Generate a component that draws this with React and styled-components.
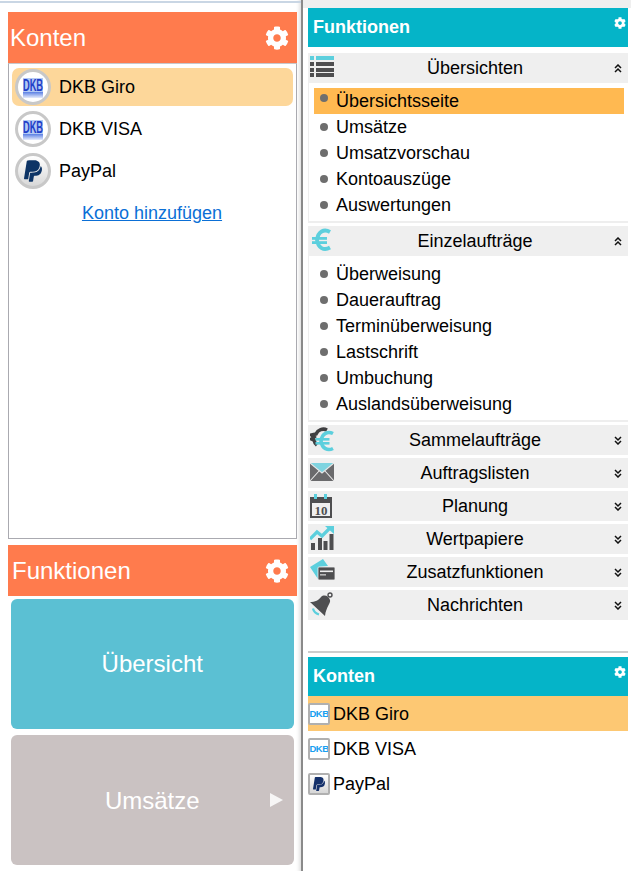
import React from "react";
import styled, { createGlobalStyle } from "styled-components";
import { FaCog, FaPaypal } from "react-icons/fa";

const Global = createGlobalStyle`
  html, body { margin: 0; padding: 0; background: #fff; }
  body { font-family: "Liberation Sans", Arial, sans-serif; color: #000; overflow: hidden; }
  * { box-sizing: border-box; }
`;

const Page = styled.div`
  display: flex;
  width: 631px;
  height: 871px;
  overflow: hidden;
`;

const LeftPane = styled.div`
  width: 303px;
  height: 871px;
  flex: none;
  display: flex;
  flex-direction: column;
  padding: 12px 4px 0 8px;
  border-right: 2px solid #8a8a8a;
  box-shadow: inset -5px 0 4px -4px #d4d4d4;
  position: relative;
  &::before {
    content: "";
    position: absolute;
    left: 0; right: 0; top: 1px;
    height: 2px;
    background: #c9d6e4;
  }
`;

const OrangeHeader = styled.div`
  height: 51px;
  flex: none;
  background: #ff7b4d;
  color: #fff;
  font-size: 24px;
  display: flex;
  align-items: center;
  justify-content: space-between;
  padding: ${(p) => (p.$tight ? "0 8px 0 4px" : "0 8px 0 2px")};
  svg { width: 24px; height: 24px; }
`;

const AccountBox = styled.div`
  height: 476px;
  flex: none;
  border: 1px solid #aaaab0;
  border-top-color: #c8c8cc;
  padding: 4px 3px 3px;
  display: flex;
  flex-direction: column;
  margin-bottom: 6px;
`;

const BigAccount = styled.div`
  height: 38px;
  margin-bottom: 4px;
  display: flex;
  align-items: center;
  gap: 8px;
  padding-left: 3px;
  border-radius: 7px;
  font-size: 18px;
  background: ${(p) => (p.$active ? "#fdd79a" : "transparent")};
`;

const RoundLogo = styled.span`
  width: 36px;
  height: 36px;
  flex: none;
  border-radius: 50%;
  border: 3px solid #c8c8c8;
  background: ${(p) => (p.$grey ? "linear-gradient(#fff, #d8d8d8)" : "#fff")};
  display: flex;
  align-items: center;
  justify-content: center;
  color: #0d3466;
  svg { display: block; }
`;

const AddLink = styled.a`
  display: block;
  text-align: center;
  font-size: 18px;
  line-height: 22px;
  color: #0b6fd6;
  text-decoration: underline;
  margin-top: 8px;
  padding-right: 1px;
`;

const Tiles = styled.div`
  display: flex;
  flex-direction: column;
  gap: 6px;
  padding: 3px 3px 0 2.5px;
`;

const Tile = styled.div`
  height: 130px;
  border-radius: 6px;
  background: ${(p) => p.$bg};
  color: #fff;
  font-size: 24px;
  display: flex;
  align-items: center;
  justify-content: center;
  position: relative;
  padding-top: ${(p) => (p.$low ? "2px" : "0")};
`;

const TileArrow = styled.span`
  position: absolute;
  right: 11px;
  top: 58px;
  width: 0;
  height: 0;
  border-left: 13px solid #f7f6f6;
  border-top: 7.5px solid transparent;
  border-bottom: 7.5px solid transparent;
`;

const RightPane = styled.div`
  flex: 1;
  min-width: 0;
  display: flex;
  flex-direction: column;
  padding: 8px 3px 0 5px;
  position: relative;
  &::before {
    content: "";
    position: absolute;
    left: 0; right: 0; top: 0;
    height: 8px;
    background: #efefef;
  }
`;

const TealHeader = styled.div`
  height: 39px;
  flex: none;
  background: #05b4c8;
  color: #fff;
  font-size: 18px;
  font-weight: 700;
  display: flex;
  justify-content: space-between;
  padding: 0 2px 0 5px;
  line-height: 38px;
  svg { width: 12px; height: 12px; margin-top: 9px; }
`;

const Accordion = styled.div`
  display: flex;
  flex-direction: column;
  margin-top: 6px;
`;

const SectionHead = styled.div`
  height: 30px;
  flex: none;
  background: #efefef;
  display: flex;
  align-items: center;
  justify-content: center;
  font-size: 18px;
  padding-left: 14px;
  position: relative;
  margin-bottom: ${(p) => (p.$open ? "0" : "3px")};
`;

const SectionIcon = styled.span`
  position: absolute;
  left: 2px;
  top: 2px;
  width: 26px;
  height: 26px;
  svg { display: block; }
`;

const Chev = styled.svg`
  position: absolute;
  right: 6px;
  top: 11px;
  width: 8px;
  height: 9px;
`;

const SectionBody = styled.div`
  border-left: 1px solid #eee;
  border-bottom: 2px solid #eee;
  padding: 5px 4px 3px 5px;
  margin-bottom: 3px;
`;

const MenuItem = styled.div`
  height: 26px;
  line-height: 26px;
  display: flex;
  font-size: 18px;
  padding-left: 22px;
  position: relative;
  background: ${(p) => (p.$active ? "#ffb951" : "transparent")};
  &::before {
    content: "";
    position: absolute;
    left: 6px;
    top: ${(p) => (p.$active ? "6px" : "9px")};
    width: 8px;
    height: 8px;
    border-radius: 50%;
    background: #6e6e6e;
  }
`;

const Rule = styled.div`
  height: 2px;
  flex: none;
  background: #cdcdcd;
  margin-top: 28px;
  margin-bottom: 4px;
`;

const SmallAccount = styled.div`
  height: 35px;
  display: flex;
  align-items: center;
  gap: 3px;
  font-size: 18px;
  background: ${(p) => (p.$active ? "#fdc873" : "transparent")};
`;

const SmallName = styled.span`
  padding-top: 2px;
`;

const SquareLogo = styled.span`
  width: 22px;
  height: 22px;
  flex: none;
  border: 2px solid #b0b0b0;
  border-radius: 2px;
  background: ${(p) => (p.$grey ? "linear-gradient(#fff, #d6d6d6)" : "#fff")};
  display: flex;
  align-items: center;
  justify-content: center;
  color: #14306b;
  overflow: hidden;
`;

const SmallDkb = styled.span`
  color: #18a0f0;
  font-size: 9.5px;
  font-weight: 700;
  letter-spacing: -0.6px;
`;

const Teal = "#5ccfdd";
const Dark = "#4e4e50";

const DkbMark = ({ id }) => (
  <svg width="30" height="30" viewBox="0 0 30 30">
    <defs>
      <linearGradient id={id} x1="0" y1="0" x2="0" y2="1">
        <stop offset="0" stopColor="#5a7fe4" />
        <stop offset="1" stopColor="#5a7fe4" stopOpacity="0.15" />
      </linearGradient>
    </defs>
    <rect x="5" y="6" width="20" height="14" fill="#b4c9f4" />
    <rect x="5" y="20" width="20" height="6" fill={`url(#${id})`} />
    <text
      transform="translate(15 18.5) scale(0.55 1)"
      textAnchor="middle"
      fontFamily="Liberation Sans"
      fontWeight="700"
      fontSize="17"
      fill="#1f3fc8"
    >
      DKB
    </text>
  </svg>
);

const ListIcon = () => (
  <svg width="24" height="22" viewBox="0 0 24 22">
    <rect x="0" y="1" width="4" height="4" fill={Teal} />
    <rect x="6" y="1" width="18" height="4" fill={Teal} />
    {[7, 13, 18].map((y) => (
      <g key={y} fill={Dark}>
        <rect x="0" y={y} width="4" height="4" />
        <rect x="6" y={y} width="18" height="4" />
      </g>
    ))}
  </svg>
);

const EuroIcon = () => (
  <svg width="24" height="24" viewBox="0 0 24 24">
    <path d="M20 4 C14 0.5 8 3.5 7 12 C8 20 14 23 20 19.5" fill="none" stroke={Teal} strokeWidth="3.8" />
    <rect x="2" y="9" width="15" height="2.8" fill={Teal} />
    <rect x="2" y="13.2" width="15" height="2.8" fill={Teal} />
  </svg>
);

const EuroPairIcon = () => (
  <svg width="26" height="26" viewBox="0 0 26 26">
    <path d="M17 3 A8 8 0 0 0 6 7 L1.5 8 L4 10 L1.5 12 L4 13 A8 8 0 0 0 7 18" fill="none" stroke="#3f3f41" strokeWidth="3.6" />
    <path d="M23 6.5 C18 4 12 6 11 14 C12 22 18 24 23 21.5" fill="none" stroke={Teal} strokeWidth="3.6" />
    <rect x="5.5" y="11" width="14" height="2.6" fill={Teal} />
    <rect x="5.5" y="15" width="14" height="2.6" fill={Teal} />
  </svg>
);

const MailIcon = () => (
  <svg width="24" height="20" viewBox="0 0 24 20" style={{ marginTop: 3 }}>
    <rect x="0" y="0" width="24" height="18" fill="#6a6a6c" />
    <path d="M0 0 H24 L12 10 Z" fill="#7fd4e0" />
    <path d="M0 0 L12 10 L24 0 M0 18 L9 8 M24 18 L15 8" fill="none" stroke="#e8e8e8" strokeWidth="1.1" />
  </svg>
);

const CalendarIcon = () => (
  <svg width="22" height="25" viewBox="0 0 22 25" style={{ marginTop: 1 }}>
    <rect x="0" y="3" width="22" height="21" fill={Dark} />
    <rect x="2" y="9" width="18" height="13" fill="#efefef" />
    <rect x="4" y="0" width="3" height="5" fill={Teal} />
    <rect x="14" y="0" width="3" height="5" fill={Teal} />
    <text x="11" y="20.5" textAnchor="middle" fontFamily="Liberation Serif" fontWeight="700" fontSize="13" fill={Dark}>10</text>
  </svg>
);

const ChartIcon = () => (
  <svg width="24" height="25" viewBox="0 0 24 25">
    <path d="M0 13 L7 6 L12 10 L20 2" fill="none" stroke={Teal} strokeWidth="3.2" />
    <path d="M15 0 H24 V8 Z" fill={Teal} />
    <g fill={Dark}>
      <rect x="1" y="17" width="4" height="7" />
      <rect x="8" y="12" width="4" height="12" />
      <rect x="13.5" y="15" width="4" height="9" />
      <rect x="19.5" y="8" width="4" height="16" />
    </g>
  </svg>
);

const CardsIcon = () => (
  <svg width="25" height="22" viewBox="0 0 25 22">
    <path d="M0 8 L13 0 L18 7 L9 8 V20 H8 Z" fill={Teal} />
    <rect x="8" y="8" width="17" height="13" rx="1" fill={Dark} stroke="#efefef" strokeWidth="0.8" />
    <rect x="10" y="11.5" width="13" height="1.6" fill="#efefef" />
    <rect x="10" y="15" width="6" height="1.6" fill="#b8b8b8" />
  </svg>
);

const BellIcon = () => (
  <svg width="24" height="25" viewBox="0 0 24 25">
    <path d="M0 10 C5 10 9 8 11 5 C14 2 19 4 20 8 C21 11 16 15 15 24 Z" fill={Dark} />
    <path d="M3 16.5 Q4 21 9 22.5" fill="none" stroke={Teal} strokeWidth="2.2" />
    <circle cx="20" cy="3" r="2" fill="none" stroke={Dark} strokeWidth="1.4" />
  </svg>
);

const Chevrons = ({ up }) => (
  <Chev viewBox="0 0 8 9">
    <g fill="none" stroke="#111" strokeWidth="1.5" transform={up ? undefined : "rotate(180 4 4.5)"}>
      <path d="M1 4 L4 1 L7 4" />
      <path d="M1 8 L4 5 L7 8" />
    </g>
  </Chev>
);

const Section = ({ icon, title, items, activeItem }) => (
  <>
    <SectionHead $open={!!items}>
      <SectionIcon>{icon}</SectionIcon>
      {title}
      <Chevrons up={!!items} />
    </SectionHead>
    {items && (
      <SectionBody>
        {items.map((it) => (
          <MenuItem key={it} $active={it === activeItem}>{it}</MenuItem>
        ))}
      </SectionBody>
    )}
  </>
);

export default function App() {
  return (
    <Page>
      <Global />
      <LeftPane>
        <OrangeHeader>
          <span>Konten</span>
          <FaCog />
        </OrangeHeader>
        <AccountBox>
          <BigAccount $active>
            <RoundLogo><DkbMark id="dkb-a" /></RoundLogo>DKB Giro
          </BigAccount>
          <BigAccount>
            <RoundLogo><DkbMark id="dkb-b" /></RoundLogo>DKB VISA
          </BigAccount>
          <BigAccount>
            <RoundLogo $grey><FaPaypal size={24} /></RoundLogo>PayPal
          </BigAccount>
          <AddLink>Konto hinzufügen</AddLink>
        </AccountBox>
        <OrangeHeader $tight>
          <span>Funktionen</span>
          <FaCog />
        </OrangeHeader>
        <Tiles>
          <Tile $bg="#5bc0d3">Übersicht</Tile>
          <Tile $bg="#cac2c2" $low>Umsätze<TileArrow /></Tile>
        </Tiles>
      </LeftPane>
      <RightPane>
        <TealHeader>
          <span>Funktionen</span>
          <FaCog />
        </TealHeader>
        <Accordion>
          <Section
            icon={<ListIcon />}
            title="Übersichten"
            activeItem="Übersichtsseite"
            items={["Übersichtsseite", "Umsätze", "Umsatzvorschau", "Kontoauszüge", "Auswertungen"]}
          />
          <Section
            icon={<EuroIcon />}
            title="Einzelaufträge"
            items={["Überweisung", "Dauerauftrag", "Terminüberweisung", "Lastschrift", "Umbuchung", "Auslandsüberweisung"]}
          />
          <Section icon={<EuroPairIcon />} title="Sammelaufträge" />
          <Section icon={<MailIcon />} title="Auftragslisten" />
          <Section icon={<CalendarIcon />} title="Planung" />
          <Section icon={<ChartIcon />} title="Wertpapiere" />
          <Section icon={<CardsIcon />} title="Zusatzfunktionen" />
          <Section icon={<BellIcon />} title="Nachrichten" />
        </Accordion>
        <Rule />
        <TealHeader>
          <span>Konten</span>
          <FaCog />
        </TealHeader>
        <SmallAccount $active>
          <SquareLogo><SmallDkb>DKB</SmallDkb></SquareLogo><SmallName>DKB Giro</SmallName>
        </SmallAccount>
        <SmallAccount>
          <SquareLogo><SmallDkb>DKB</SmallDkb></SquareLogo><SmallName>DKB VISA</SmallName>
        </SmallAccount>
        <SmallAccount>
          <SquareLogo $grey><FaPaypal size={16} /></SquareLogo><SmallName>PayPal</SmallName>
        </SmallAccount>
      </RightPane>
    </Page>
  );
}
